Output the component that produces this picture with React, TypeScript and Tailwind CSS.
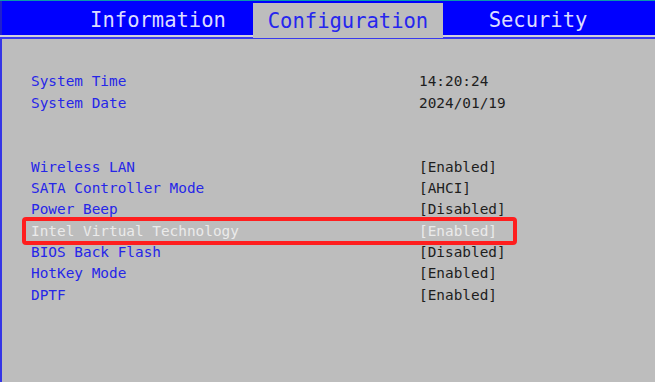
import React from "react";

const rows: ([string, string] | null)[] = [
  ["System Time", "14:20:24"],
  ["System Date", "2024/01/19"],
  null,
  null,
  ["Wireless LAN", "[Enabled]"],
  ["SATA Controller Mode", "[AHCI]"],
  ["Power Beep", "[Disabled]"],
  ["Intel Virtual Technology", "[Enabled]"],
  ["BIOS Back Flash", "[Disabled]"],
  ["HotKey Mode", "[Enabled]"],
  ["DPTF", "[Enabled]"],
];

export default function App() {
  return (
    <div
      className="w-[655px] h-[382px] overflow-hidden bg-[#bdbdbd] flex flex-col"
      style={{ fontFamily: '"DejaVu Sans Mono", "Liberation Mono", monospace' }}
    >
      <div className="h-px bg-[#0b98aa] shrink-0" />
      <div className="h-[34px] bg-[#0000ff] flex shrink-0 relative">
        <div className="w-[2px] bg-[#2020cc]" />
        <div className="ml-[61px] w-[190px] flex items-center justify-center text-[20.5px] text-[#dcdcff] pt-[4px]">
          Information
        </div>
        <div className="w-[190px] mt-[2px] -mb-[3px] bg-[#bdbdbd] flex items-center justify-center text-[20.5px] text-[#2626ee] relative z-10 pt-[2px]">
          Configuration
        </div>
        <div className="w-[190px] flex items-center justify-center text-[20.5px] text-[#dcdcff] pt-[4px]">
          Security
        </div>
      </div>
      <div className="h-[2px] bg-[#cfcfdc] shrink-0" />
      <div className="h-[2px] bg-[#3a3aee] shrink-0" />
      <div className="flex-1 border-l-2 border-[#3535e6] pt-[32.5px] pl-[29px] text-[14.4px]">
        {rows.map((r, i) =>
          r ? (
            <div key={i} className="flex h-[21.33px] items-center relative">
              {r[0] === "Intel Virtual Technology" && (
                <span className="absolute left-[-9px] top-[-4px] w-[495px] h-[28px] border-[4px] border-[#ff1e1e] rounded-[4px]" />
              )}
              <span
                className={
                  "w-[388px] " +
                  (r[0] === "Intel Virtual Technology" ? "text-[#ebebeb]" : "text-[#2626e8]")
                }
              >
                {r[0]}
              </span>
              <span
                className={
                  r[0] === "Intel Virtual Technology" ? "text-[#ebebeb]" : "text-[#1e1e1e]"
                }
              >
                {r[1]}
              </span>
            </div>
          ) : (
            <div key={i} className="h-[21.33px]" />
          )
        )}
      </div>
    </div>
  );
}
